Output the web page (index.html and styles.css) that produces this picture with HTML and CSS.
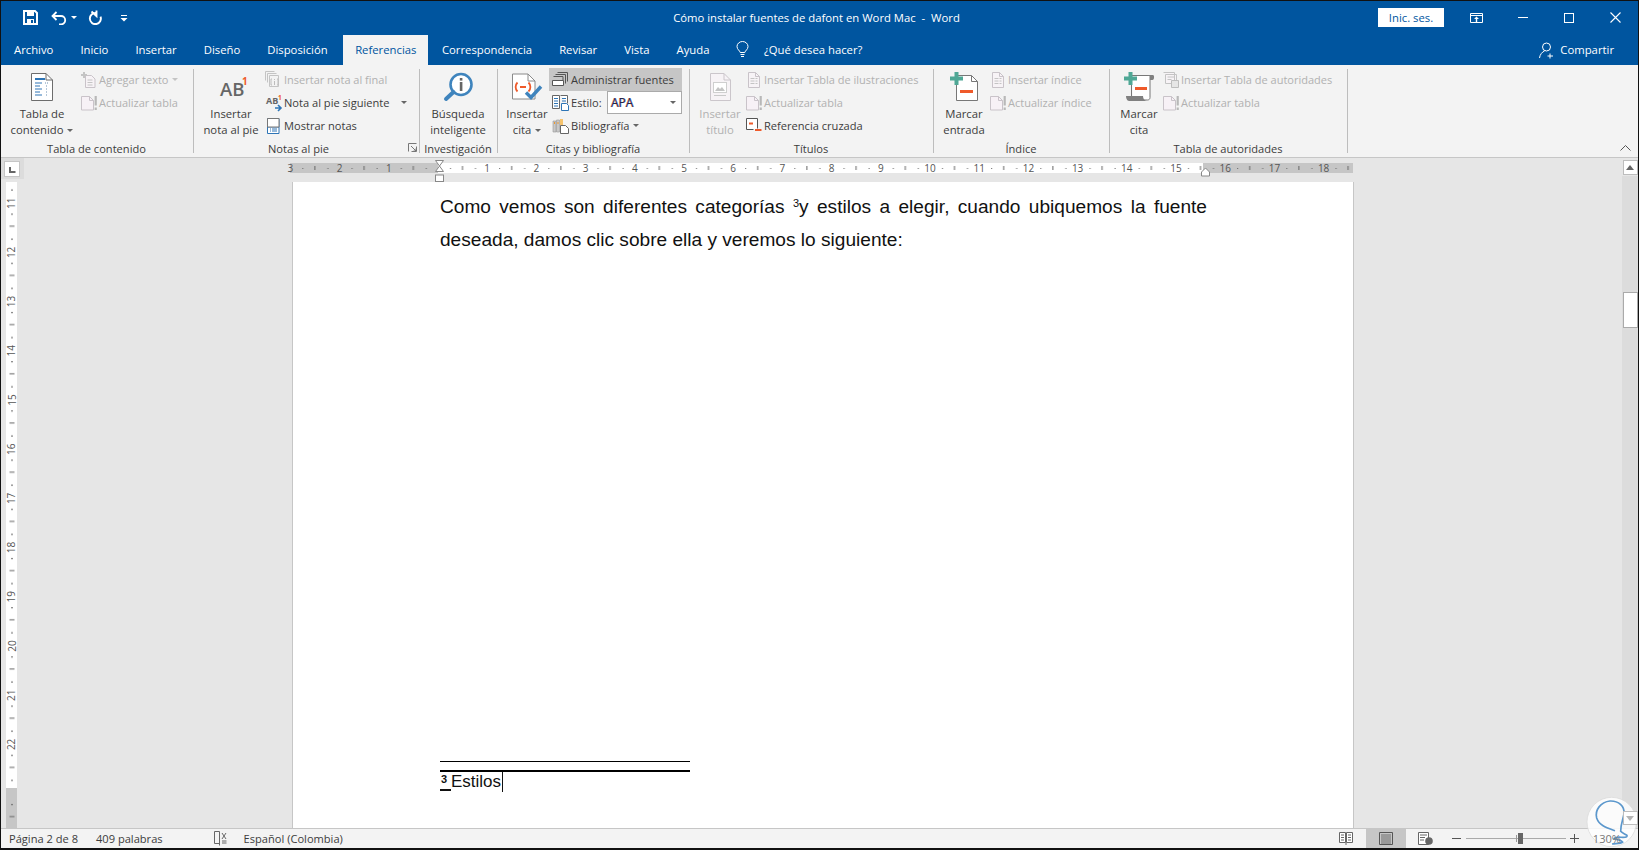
FILE: index.html
```html
<!DOCTYPE html>
<html lang="es">
<head>
<meta charset="utf-8">
<title>Cómo instalar fuentes de dafont en Word Mac - Word</title>
<link rel="stylesheet" href="styles.css">
</head>
<body>
<svg class="defs" width="0" height="0" aria-hidden="true">
  <symbol id="i-update" viewBox="0 0 16 16">
    <path d="M.5 1.5h8l4 4v9.500h-12z" fill="#f7f1f6" stroke="#c9c3c9"/><path d="M8.500 1.500v4h4" fill="none" stroke="#c9c3c9"/>
    <rect x="13.600" y="1" width="2.200" height="9.500" fill="#b8b8b8"/><rect x="13.600" y="12.500" width="2.200" height="2.500" fill="#b8b8b8"/>
  </symbol>
  <symbol id="i-lines" viewBox="0 0 16 16">
    <path d="M2.500.5h7l4 4v11h-11z" fill="#f7f3f6" stroke="#c9c3c9"/><path d="M9.500.5v4h4" fill="none" stroke="#c9c3c9"/>
    <path d="M4.500 6.500h7M4.500 9h7M4.500 11.500h7" stroke="#c4c4c4" stroke-dasharray="4 1"/>
  </symbol>
  <symbol id="i-plus" viewBox="0 0 13 13"><path d="M4.500 0h4v4.500H13v4H8.500V13h-4V8.500H0v-4h4.500z" fill="#4fa795"/></symbol>
</svg>

<div class="window">
  <header class="titlebar">
    <div class="qat">
      <svg class="qat-save" width="15" height="15" viewBox="0 0 15 15"><path d="M1 1h11l2 2v11H1z" fill="none" stroke="#fff" stroke-width="2"/><rect x="4" y="1" width="7" height="5" fill="#fff"/><rect x="4" y="9" width="7" height="5" fill="#fff"/><rect x="8" y="10" width="2" height="3" fill="#00559f"/></svg>
      <svg class="qat-undo" width="16" height="14" viewBox="0 0 16 14"><path d="M5.500 1L1.500 5l4 4M1.500 5H10a4.200 4.200 0 0 1 0 8.400H8" fill="none" stroke="#fff" stroke-width="1.800"/></svg>
      <i class="caret caret-w"></i>
      <svg class="qat-redo" width="14" height="15" viewBox="0 0 14 15"><path d="M8 3.100a5.500 5.500 0 1 0 4.500 3.500M8.500.5v5.500L3.500 1.500" fill="none" stroke="#fff" stroke-width="1.900"/></svg>
      <svg class="qat-more" width="8" height="8" viewBox="0 0 8 8"><path d="M1 1h6v1H1zM.5 4h7L4 7.500z" fill="#fff"/></svg>
    </div>
    <div class="doc-title">Cómo instalar fuentes de dafont en Word Mac&nbsp; - &nbsp;Word</div>
    <div class="winctl">
      <button class="signin">Inic. ses.</button>
      <svg class="wc-ribbon" width="13" height="10" viewBox="0 0 13 10"><path d="M.5.500h12v9H.5zM.5 2.500h12" fill="none" stroke="#fff"/><path d="M6.500 3.500L4 6h1.800v3h1.400V6H9z" fill="#fff"/></svg>
      <span class="wc wc-min"></span>
      <span class="wc wc-max"></span>
      <svg class="wc-close" width="11" height="11" viewBox="0 0 11 11"><path d="M.5.500l10 10M10.500.500l-10 10" stroke="#fff" stroke-width="1.100"/></svg>
    </div>
  </header>

  <nav class="tabs">
    <span class="tab">Archivo</span>
    <span class="tab">Inicio</span>
    <span class="tab">Insertar</span>
    <span class="tab">Diseño</span>
    <span class="tab">Disposición</span>
    <span class="tab tab-active">Referencias</span>
    <span class="tab">Correspondencia</span>
    <span class="tab">Revisar</span>
    <span class="tab">Vista</span>
    <span class="tab">Ayuda</span>
    <svg class="bulb" width="13" height="17" viewBox="0 0 13 17"><path d="M4.200 11.500C3.800 9.500 1 8.500 1 5.500a5.500 5 0 0 1 11 0c0 3-2.800 4-3.200 6zM4.500 13.500h4M5 15.500h3" fill="none" stroke="#fff"/></svg>
    <span class="tell">¿Qué desea hacer?</span>
    <span class="share">
      <svg width="17" height="17" viewBox="0 0 17 17"><circle cx="7.500" cy="5" r="4" fill="none" stroke="#fff"/><path d="M.5 16c.5-3.500 2.500-6 5-7M11 11.500v5M8.500 14h5.500" fill="none" stroke="#fff"/></svg>
      Compartir
    </span>
  </nav>

  <section class="ribbon">
    <div class="group g1">
      <div class="group-body">
        <div class="big">
          <svg class="big-icon" width="22" height="28" viewBox="0 0 22 28"><path d="M.5.500H15L21.500 7v20.500H.5z" fill="#fff" stroke="#6d6d6d"/><path d="M15 .5V7h6.500" fill="none" stroke="#6d6d6d"/><path d="M4 5h10v2H4z" fill="#2e75b6"/><path d="M4 10h7M4 13h5M4 16h7M4 19h5M4 22h7" stroke="#2e75b6"/><path d="M14 10h3M15 13h2M15 16h2M15 19h2M15 22h2" stroke="#6d8fb0" stroke-dasharray="1 1"/></svg>
          <span class="big-label">Tabla de<br>contenido <i class="caret"></i></span>
        </div>
        <div class="stack">
          <div class="item off"><span class="ic"><svg width="16" height="16" viewBox="0 0 16 16"><path d="M4.500 3.500h6l3.500 3.500v8.500H4.500z" fill="#f7f3f6" stroke="#c9c3c9"/><path d="M3 0v6M0 3h6" stroke="#c4c4c4" stroke-width="2"/><path d="M6.500 8h5M6.500 10.500h5M6.500 13h5" stroke="#c4c4c4"/></svg></span>Agregar texto <i class="caret caret-off"></i></div>
          <div class="item off"><span class="ic"><svg width="16" height="16"><use href="#i-update"/></svg></span>Actualizar tabla</div>
        </div>
      </div>
      <div class="group-label">Tabla de contenido</div>
    </div>

    <div class="group g2">
      <div class="group-body">
        <div class="big">
          <svg class="big-icon" width="32" height="28" viewBox="0 0 32 28"><text x="5" y="23" class="ab-big">AB</text><text x="27" y="12" class="ab-sup">1</text></svg>
          <span class="big-label">Insertar<br>nota al pie</span>
        </div>
        <div class="stack">
          <div class="item off"><span class="ic"><svg width="17" height="17" viewBox="0 0 17 17"><path d="M.5.500h9M.5.500v9M2.500 2.500h9M2.500 2.500v9M4.500 4.500h9v11h-9z" fill="none" stroke="#c4c4c4"/><path d="M7 8H6v6h1M12 8h1v6h-1M9.500 8v1M9.500 10v4" fill="none" stroke="#bdbdbd"/></svg></span>Insertar nota al final</div>
          <div class="item"><span class="ic"><svg width="18" height="16" viewBox="0 0 18 16"><text x="1" y="9" class="ab-small">AB</text><text x="13" y="5" class="ab-small-sup">1</text><path d="M10 13h5M13 10l3 3-3 3" fill="none" stroke="#2e75b6" stroke-width="1.600"/></svg></span>Nota al pie siguiente<i class="caret caret-far"></i></div>
          <div class="item"><span class="ic"><svg width="13" height="16" viewBox="0 0 13 16"><path d="M.5.500h11.500v15H.5zM.5 9h11.500" fill="#fff" stroke="#2e75b6"/><path d="M.5.500h11.500v8.500H.5z" fill="#fff" stroke="#777"/><path d="M3 11h1M5 11h5M3 13h1M5 13h5" stroke="#2e75b6"/></svg></span>Mostrar notas</div>
        </div>
      </div>
      <div class="group-label">Notas al pie</div>
      <svg class="launcher" width="9" height="9" viewBox="0 0 9 9"><path d="M.5 8.500V.5h8M8.500 3.500v5h-5M3 3l5 5M5.500 8H8V5.500" fill="none" stroke="#777"/></svg>
    </div>

    <div class="group g3">
      <div class="group-body">
        <div class="big">
          <svg class="big-icon" width="30" height="28" viewBox="0 0 30 28"><circle cx="18" cy="11.500" r="10.500" fill="#fff" stroke="#3f84bd" stroke-width="2.600"/><path d="M10.500 19L3 26" stroke="#3f84bd" stroke-width="4" stroke-linecap="round"/><rect x="16.800" y="9" width="2.600" height="9" fill="#666"/><rect x="16.800" y="5" width="2.600" height="2.600" fill="#666"/></svg>
          <span class="big-label">Búsqueda<br>inteligente</span>
        </div>
      </div>
      <div class="group-label">Investigación</div>
    </div>

    <div class="group g4">
      <div class="group-body">
        <div class="big">
          <svg class="big-icon" width="32" height="29" viewBox="0 0 32 29"><path d="M1.500 1.500H17l7 7v18H1.500z" fill="#fff" stroke="#8a8a8a"/><path d="M17 1.500v7h7" fill="none" stroke="#8a8a8a"/><path d="M6.500 10c-2.500 2.500-2.500 6.500 0 9M17.500 10c2.500 2.500 2.500 6.500 0 9M9 14.500h6" fill="none" stroke="#ef5a2a" stroke-width="1.800"/><path d="M15 20l5 5 10-11" fill="none" stroke="#3f84bd" stroke-width="3.400"/></svg>
          <span class="big-label">Insertar<br>cita <i class="caret"></i></span>
        </div>
        <div class="stack">
          <div class="item item-on"><span class="ic"><svg width="16" height="15" viewBox="0 0 16 15"><path d="M5.500.500h10v9M3.500 2.500h10v9" fill="none" stroke="#555"/><path d="M1.500 4.500h9.500v4" fill="none" stroke="#555"/><path d="M.5 8.500h11v5H.5z" fill="#fff" stroke="#555"/></svg></span>Administrar fuentes</div>
          <div class="item item-style"><span class="ic"><svg width="17" height="16" viewBox="0 0 17 16"><path d="M.5.500h7v13H.5zM8.500.500h7v8" fill="#fff" stroke="#666"/><path d="M2 3.500h4M2 6h4M2 8.500h4M2 11h4M10 3.500h4M10 6h4" stroke="#2e75b6"/><path d="M9.500 8.500h5l2 2v5h-7z" fill="#fff" stroke="#2e75b6"/></svg></span>Estilo:
            <span class="select"><b class="apa">APA</b><i class="caret"></i></span>
          </div>
          <div class="item"><span class="ic"><svg width="17" height="16" viewBox="0 0 17 16"><path d="M1 3h3v11H1zM4.500 2h3v12h-3z" fill="#c8c8c8" stroke="#999" stroke-width=".6"/><path d="M8 1h3v6H8z" fill="#f6c36c"/><path d="M2 5h1M5.500 5h1" stroke="#f09a2e" stroke-width="2"/><path d="M8.500 7.500h5l3 3v5h-8z" fill="#fff" stroke="#666"/></svg></span>Bibliografía <i class="caret"></i></div>
        </div>
      </div>
      <div class="group-label">Citas y bibliografía</div>
    </div>

    <div class="group g5">
      <div class="group-body">
        <div class="big big-off">
          <svg class="big-icon" width="21" height="28" viewBox="0 0 21 28"><path d="M.5.500H14L20.500 7v20.500H.5z" fill="#f7f3f6" stroke="#cbc6cb"/><path d="M14 .5V7h6.500" fill="none" stroke="#cbc6cb"/><rect x="3.500" y="9.500" width="13" height="10" fill="#fff" stroke="#cfcfcf"/><path d="M5 18l3-4 2 2 2-2 3 4z" fill="#c4c4c4"/><path d="M4 22.500h12" stroke="#c9c9c9"/></svg>
          <span class="big-label">Insertar<br>título</span>
        </div>
        <div class="stack">
          <div class="item off"><span class="ic"><svg width="16" height="16"><use href="#i-lines"/></svg></span>Insertar Tabla de ilustraciones</div>
          <div class="item off"><span class="ic"><svg width="16" height="16"><use href="#i-update"/></svg></span>Actualizar tabla</div>
          <div class="item"><span class="ic"><svg width="16" height="15" viewBox="0 0 16 15"><path d="M11.500 10.500V.5H.5v11h7" fill="#fff" stroke="#555"/><path d="M3 5.500h4" stroke="#ef5a2a" stroke-width="2"/><path d="M9 12h6.500" stroke="#ef5a2a" stroke-width="2"/></svg></span>Referencia cruzada</div>
        </div>
      </div>
      <div class="group-label">Títulos</div>
    </div>

    <div class="group g6">
      <div class="group-body">
        <div class="big">
          <svg class="big-icon" width="28" height="30" viewBox="0 0 28 30"><path d="M6.500 3.500h15l6 6v19h-21z" fill="#fff" stroke="#777"/><path d="M21.500 3.500v6h6" fill="none" stroke="#777"/><use href="#i-plus" x="0" y="0" width="13" height="13"/><rect x="10" y="18" width="13" height="3" fill="#ef5a2a"/></svg>
          <span class="big-label">Marcar<br>entrada</span>
        </div>
        <div class="stack">
          <div class="item off"><span class="ic"><svg width="16" height="16"><use href="#i-lines"/></svg></span>Insertar índice</div>
          <div class="item off"><span class="ic"><svg width="16" height="16"><use href="#i-update"/></svg></span>Actualizar índice</div>
        </div>
      </div>
      <div class="group-label">Índice</div>
    </div>

    <div class="group g7">
      <div class="group-body">
        <div class="big">
          <svg class="big-icon" width="32" height="30" viewBox="0 0 32 30"><path d="M8.500 3.500H27v22c0 1.500-1 2.500-2.500 2.500H10" fill="#fff" stroke="#777"/><path d="M24 3h6c1.500 0 1.500 5-.5 5H27V4" fill="#808080"/><path d="M3 24h17c0 2 1 4 3 5H6c-2 0-3-3-3-5z" fill="#808080"/><path d="M8.500 3.500V24" stroke="#777"/><use href="#i-plus" x="1" y="0" width="13" height="13"/><rect x="12" y="15" width="12" height="3" fill="#ef5a2a"/></svg>
          <span class="big-label">Marcar<br>cita</span>
        </div>
        <div class="stack">
          <div class="item off"><span class="ic"><svg width="17" height="16" viewBox="0 0 17 16"><path d="M.5.500h11v9M2.500 2.500h11v9H2.500z" fill="#f7f3f6" stroke="#c4c4c4"/><path d="M4.500 5h7M4.500 7.500h4" stroke="#c4c4c4"/><path d="M8.500 8.500h7v7h-7z" fill="#e6e6e6" stroke="#bdbdbd"/></svg></span>Insertar Tabla de autoridades</div>
          <div class="item off"><span class="ic"><svg width="16" height="16"><use href="#i-update"/></svg></span>Actualizar tabla</div>
        </div>
      </div>
      <div class="group-label">Tabla de autoridades</div>
    </div>

    <div class="group-rest">
      <svg class="collapse" width="11" height="6" viewBox="0 0 11 6"><path d="M.5 5.500l5-5 5 5" fill="none" stroke="#555"/></svg>
    </div>
  </section>

  <main class="workspace">
    <div class="doc-col">
      <div class="hruler-row">
        <svg class="hruler" width="1621" height="24" viewBox="1 158 1621 24">
          <defs>
            <pattern id="ht" patternUnits="userSpaceOnUse" x="438" y="163" width="49.2" height="10">
              <rect x="12" y="5" width="1" height="1" fill="#666"/><rect x="24" y="3" width="1" height="4" fill="#666"/><rect x="37" y="5" width="1" height="1" fill="#666"/>
            </pattern>
          </defs>
          <rect x="1" y="158" width="23" height="21" fill="#dcdcdc"/>
          <rect x="4.500" y="161.500" width="15" height="15" fill="#fff" stroke="#c6c6c6"/>
          <path d="M9 167v6h6.500v-2H11v-4z" fill="#666"/>
          <rect x="290" y="163" width="148" height="10" fill="#c6c6c6"/>
          <rect x="438" y="163" width="765" height="10" fill="#fff"/>
          <rect x="1203" y="163" width="150" height="10" fill="#c6c6c6"/>
          <rect x="290" y="163" width="1063" height="10" fill="url(#ht)"/>
          <g class="rnum">
            <text x="290.400" y="172">3</text><text x="339.600" y="172">2</text><text x="388.800" y="172">1</text>
            <text x="487.200" y="172">1</text><text x="536.400" y="172">2</text><text x="585.600" y="172">3</text><text x="634.800" y="172">4</text><text x="684" y="172">5</text><text x="733.200" y="172">6</text><text x="782.400" y="172">7</text><text x="831.600" y="172">8</text><text x="880.800" y="172">9</text><text x="930" y="172">10</text><text x="979.200" y="172">11</text><text x="1028.400" y="172">12</text><text x="1077.600" y="172">13</text><text x="1126.800" y="172">14</text><text x="1176" y="172">15</text><text x="1225.200" y="172">16</text><text x="1274.400" y="172">17</text><text x="1323.600" y="172">18</text>
          </g>
          <path d="M435.500 160.500h8l-4 5.500 4 5.500h-8l4-5.500z" fill="#fff" stroke="#888"/>
          <rect x="435.500" y="175" width="8" height="6.500" fill="#fff" stroke="#888"/>
          <path d="M1205.500 168l4 4v4h-8v-4z" fill="#fff" stroke="#888"/>
        </svg>
      </div>
      <div class="doc-row">
        <div class="vruler-col">
          <svg class="vruler" width="291" height="646" viewBox="1 182 291 646">
            <defs>
              <pattern id="vt" patternUnits="userSpaceOnUse" x="6" y="201.700" width="11" height="49.2">
                <rect x="5" y="12" width="2" height="1" fill="#666"/><rect x="3.500" y="24" width="5" height="1" fill="#666"/><rect x="5" y="37" width="2" height="1" fill="#666"/>
              </pattern>
            </defs>
            <rect x="6" y="182" width="11" height="606" fill="#fff"/>
            <rect x="6" y="788" width="11" height="40" fill="#c6c6c6"/>
            <rect x="6" y="182" width="11" height="646" fill="url(#vt)"/>
            <g class="rnum" transform="translate(0 1.500)">
              <text transform="rotate(-90 15.500 201.700)" x="15.500" y="201.700">11</text><text transform="rotate(-90 15.500 250.900)" x="15.500" y="250.900">12</text><text transform="rotate(-90 15.500 300.100)" x="15.500" y="300.100">13</text><text transform="rotate(-90 15.500 349.300)" x="15.500" y="349.300">14</text><text transform="rotate(-90 15.500 398.500)" x="15.500" y="398.500">15</text><text transform="rotate(-90 15.500 447.700)" x="15.500" y="447.700">16</text><text transform="rotate(-90 15.500 496.900)" x="15.500" y="496.900">17</text><text transform="rotate(-90 15.500 546.100)" x="15.500" y="546.100">18</text><text transform="rotate(-90 15.500 595.300)" x="15.500" y="595.300">19</text><text transform="rotate(-90 15.500 644.500)" x="15.500" y="644.500">20</text><text transform="rotate(-90 15.500 693.700)" x="15.500" y="693.700">21</text><text transform="rotate(-90 15.500 742.900)" x="15.500" y="742.900">22</text>
            </g>
          </svg>
        </div>
        <article class="page">
          <p class="para">Como vemos son diferentes categorías <sup class="fn-ref">3</sup>y estilos a elegir, cuando ubiquemos la fuente deseada, damos clic sobre ella y veremos lo siguiente:</p>
          <div class="footnote">
            <div class="rule rule-thin"></div>
            <div class="rule rule-thick"></div>
            <div class="fn-text"><span class="fn-mark"><sup>3</sup></span><span class="fn-body">Estilos</span></div>
          </div>
        </article>
      </div>
    </div>
    <aside class="scrollbar">
      <span class="sb-btn"><i class="sb-up"></i></span>
      <span class="sb-thumb"></span>
      <span class="sb-btn sb-btn-bottom"><i class="sb-down"></i></span>
    </aside>
  </main>

  <footer class="status">
    <span class="st-page">Página 2 de 8</span>
    <span class="st-words">409 palabras</span>
    <svg class="st-proof" width="15" height="15" viewBox="0 0 15 15"><path d="M6.500 12.500h-5V.5h5M6.500.5v14" fill="none" stroke="#666"/><path d="M9 2l4 6M13 2L9 8M9 10h4.500M9 12h4.500" stroke="#666"/></svg>
    <span class="st-lang">Español (Colombia)</span>
    <div class="st-right">
      <span class="view"><svg width="14" height="13" viewBox="0 0 14 13"><path d="M.5.500h6v10h-6zM7.500.500h6v10h-6zM7 10.500V13" fill="#fff" stroke="#666"/><path d="M2 3h3M2 5.500h3M2 8h3M9 3h3M9 5.500h3M9 8h3" stroke="#666"/></svg></span>
      <span class="view view-on"><svg width="14" height="13" viewBox="0 0 14 13"><path d="M.5.500h13v12H.5z" fill="none" stroke="#555"/><path d="M2 3h10M2 5h10M2 7h10M2 9h10M2 11h10" stroke="#555" stroke-width=".8"/></svg></span>
      <span class="view"><svg width="15" height="13" viewBox="0 0 15 13"><path d="M.5.500h10v12H.5z" fill="#fff" stroke="#666"/><path d="M2 3h7M2 5.500h5M2 8h4" stroke="#666"/><circle cx="11" cy="9" r="3.800" fill="#666"/></svg></span>
      <span class="zoom-minus"></span>
      <span class="slider"><i class="slider-mark"></i><i class="slider-thumb"></i></span>
      <span class="zoom-plus"></span>
      <span class="zoom-val">130%</span>
    </div>
  </footer>

  <svg class="watermark" width="69" height="60" viewBox="0 0 207 180">
    <circle cx="125" cy="96" r="74" fill="#fff" fill-opacity=".82" stroke="#d9d9d9" stroke-opacity=".7" stroke-width="3"/>
    <path d="M135 122C112 114 88 108 80 84C74 60 92 36 120 33C146 32 164 48 162 70C160 88 152 100 152 124C158 132 176 134 170 140C160 146 140 136 132 146C146 150 156 152 158 156C150 162 138 160 126 162" fill="none" stroke="#5b97cc" stroke-width="5"/>
  </svg>
</div>
</body>
</html>
```
FILE: styles.css
```css
* { box-sizing: border-box; }
html, body { margin: 0; padding: 0; }
body { width: 1639px; height: 850px; overflow: hidden; font-family: "Open Sans", "Noto Sans", "Liberation Sans", sans-serif; font-size: 11.3px; color: #3c3c3c; }
.defs { position: absolute; }
.window { position: relative; width: 1639px; height: 850px; border: solid #111; border-width: 1px 1px 2px 1px; display: flex; flex-direction: column; background: #f3f3f3; }

/* caret */
.caret { display: inline-block; width: 0; height: 0; border: 3px solid transparent; border-top-color: #666; border-bottom-width: 0; vertical-align: middle; margin-left: 1px; }
.caret-w { border-top-color: #fff; }
.caret-off { border-top-color: #c4c4c4; }
.caret-far { margin-left: 9px; }

/* title bar */
.titlebar { height: 33px; background: #00559f; color: #fff; display: grid; grid-template-columns: 1fr auto 1fr; align-items: center; }
.qat { display: flex; align-items: center; padding-left: 22px; }
.qat-undo { margin-left: 13px; }
.caret-w { margin-left: 4px; }
.qat-redo { margin-left: 11px; }
.qat-more { margin-left: 18px; }
.doc-title { padding-right: 6px; }
.winctl { display: flex; align-items: center; justify-content: flex-end; }
.signin { width: 66px; height: 19px; border: 0; padding: 0; background: #fff; color: #00559f; font: inherit; }
.wc-ribbon { margin-left: 26px; }
.wc { display: block; }
.wc-min { margin-left: 35px; width: 10px; height: 1px; background: #fff; }
.wc-max { margin-left: 36px; width: 10px; height: 10px; border: 1px solid #fff; }
.wc-close { margin: 0 17px 0 36px; }

/* tabs */
.tabs { height: 31px; background: #00559f; color: #fff; display: flex; align-items: flex-end; }
.tab { height: 30px; line-height: 30px; padding: 0 13.500px; }
.tab:first-child { padding-left: 13px; }
.tab-active { background: #f3f3f3; color: #00559f; padding: 0 12px; margin-left: 2px; }
.bulb { align-self: center; margin: 0 15px 0 13px; }
.tell { height: 30px; line-height: 30px; }
.share { margin-left: auto; height: 30px; line-height: 30px; padding-right: 24px; display: flex; align-items: center; gap: 4px; }

/* ribbon */
.ribbon { height: 93px; padding-bottom: 1px; border-bottom: 1px solid #c6c6c6; display: grid; grid-template-columns: 193px 226px 78px 192px 244px 176px 238px 1fr; background: #f3f3f3; }
.group { position: relative; padding-top: 3px; display: flex; flex-direction: column; }
.group::after { content: ""; position: absolute; right: 0; top: 4px; bottom: 3px; width: 1px; background: #bdbdbd; }
.group-body { flex: 1; display: flex; }
.group-label { height: 15px; line-height: 16px; text-align: center; padding-right: 2px; font-size: 11.100px; }
.g2 .group-label { padding-right: 17px; }
.g1 .group-body { padding-left: 7px; }
.g2 .group-body { padding-left: 7px; }
.g3 .group-body { padding-left: 3px; }
.g4 .group-body { padding-left: 6px; }
.g5 .group-body { padding-left: 7px; }
.g6 .group-body { padding-left: 6px; }
.g7 .group-body { padding-left: 7px; }
.big { display: flex; flex-direction: column; align-items: center; text-align: center; flex: none; }
.big-icon { display: block; height: 30px; margin-top: 4px; margin-bottom: 4px; flex: none; overflow: visible; }
.big-label { line-height: 15.500px; white-space: nowrap; }
.big-off { color: #b1b1b1; }
.g1 .big { width: 68px; }
.g2 .big { width: 60px; }
.g3 .big { width: 70px; }
.g4 .big { width: 46px; }
.g5 .big { width: 46px; }
.g6 .big { width: 48px; }
.g7 .big { width: 44px; }
.g1 .stack { margin-left: 3px; }
.g2 .stack { margin-left: 2px; }
.g4 .stack { margin-left: -1px; }
.g5 .stack { margin-left: 1px; }
.stack { display: flex; flex-direction: column; flex: none; }
.item { display: flex; align-items: center; height: 23px; white-space: nowrap; font-size: 11.100px; }
.item .caret { margin-left: 4px; }
.item .caret-far { margin-left: 11px; }
.off { color: #b1b1b1; font-size: 11px; }
.ic { width: 20px; flex: none; display: flex; justify-content: center; }
.ic svg { overflow: visible; }
.g2 .ic { width: 21px; }
.g4 .ic { width: 22px; }
.item-on { background: #c6c6c6; width: 133px; }
.item-style { width: 133px; }
.select { margin-left: auto; width: 75px; height: 23px; border: 1px solid #aaa; background: #fff; display: flex; align-items: center; justify-content: space-between; padding: 0 5px 0 3px; }
.apa { font-weight: 400; font-size: 12px; color: #26264a; text-shadow: -.5px 0 rgba(240,110,30,.7), .5px 0 rgba(40,110,220,.7); }
.launcher { position: absolute; right: 3px; bottom: 4px; }
.group-rest { position: relative; }
.collapse { position: absolute; right: 7px; bottom: 5px; }
.ab-big { font: 600 18.500px "Open Sans", sans-serif; fill: #666; }
.ab-sup { font: 700 10px "Open Sans", sans-serif; fill: #ef5a2a; }
.ab-small { font: 700 9px "Open Sans", sans-serif; fill: #666; }
.ab-small-sup { font: 700 6.500px "Open Sans", sans-serif; fill: #ef5a2a; }

/* workspace */
.workspace { flex: 1; min-height: 0; display: flex; background: #e6e6e6; }
.doc-col { width: 1621px; display: flex; flex-direction: column; }
.hruler-row { height: 24px; flex: none; }
.hruler, .vruler { display: block; overflow: visible; }
.rnum text { font: 400 10px "Open Sans", sans-serif; fill: #555; text-anchor: middle; }
.doc-row { flex: 1; min-height: 0; display: flex; }
.vruler-col { width: 291px; flex: none; }
.page { width: 1062px; flex: none; background: #fff; border: solid #c6c6c6; border-width: 0 1px; padding: 8px 146px 36px 147px; display: flex; flex-direction: column; font-family: "Liberation Sans", Arial, sans-serif; color: #111; }
.para { margin: 0; font-size: 19.100px; line-height: 33px; text-align: justify; }
.fn-ref { font-size: 11px; line-height: 0; vertical-align: 6px; }
.footnote { margin-top: auto; width: 250px; }
.rule { background: #000; }
.rule-thin { height: 1px; }
.rule-thick { height: 2px; margin-top: 8px; }
.fn-text { height: 20px; display: flex; align-items: stretch; font-size: 17px; line-height: 20px; }
.fn-mark { width: 11px; border-bottom: 2px solid #111; height: 19px; font-size: 11px; font-weight: 700; padding-left: 1px; }
.fn-mark sup { font-size: inherit; line-height: 0; vertical-align: 3px; }
.fn-body { border-right: 1px solid #111; padding-right: 1px; }

/* scrollbar */
.scrollbar { width: 16px; flex: none; position: relative; display: flex; flex-direction: column; align-items: center; background: linear-gradient(#e6e6e6 18px, #dcdcdc 18px); }
.sb-btn { width: 15px; height: 15px; margin-top: 2px; background: #fff; border: 1px solid #bdbdbd; display: flex; align-items: center; justify-content: center; flex: none; }
.sb-up { border: 4px solid transparent; border-bottom: 5px solid #666; border-top-width: 0; }
.sb-down { border: 4px solid transparent; border-top: 5px solid #b5b5b5; border-bottom-width: 0; }
.sb-thumb { width: 15px; height: 36px; margin-top: 117px; background: #fff; border: 1px solid #aaa; flex: none; }
.sb-btn-bottom { position: relative; z-index: 2; margin-top: auto; margin-bottom: 3px; height: 14px; }

/* status */
.status { height: 20px; flex: none; border-top: 1px solid #c6c6c6; background: #f3f3f3; display: flex; align-items: center; font-size: 11.100px; }
.st-page { margin-left: 8px; }
.st-words { margin-left: 18px; }
.st-proof { margin-left: 50px; }
.st-lang { margin-left: 16px; }
.st-right { margin-left: auto; display: flex; align-items: center; height: 100%; padding-right: 17px; }
.view { width: 40px; height: 100%; display: flex; align-items: center; justify-content: center; }
.view-on { background: #c6c6c6; }
.zoom-minus, .zoom-plus { position: relative; display: block; width: 9px; height: 1px; background: #555; }
.zoom-minus { margin-left: 6px; }
.zoom-plus { margin-left: 4px; }
.zoom-plus::after { content: ""; position: absolute; left: 4px; top: -4px; width: 1px; height: 9px; background: #555; }
.slider { position: relative; display: block; width: 100px; height: 1px; margin-left: 5px; background: #aaa; }
.slider-mark { position: absolute; left: 50px; top: -3px; width: 1px; height: 7px; background: #999; }
.slider-thumb { position: absolute; left: 52px; top: -5px; width: 5px; height: 11px; background: #666; }
.zoom-val { position: relative; z-index: 2; margin-left: 14px; color: #777; }

/* watermark */
.watermark { position: absolute; z-index: 1; right: -1px; bottom: -2px; }
```
